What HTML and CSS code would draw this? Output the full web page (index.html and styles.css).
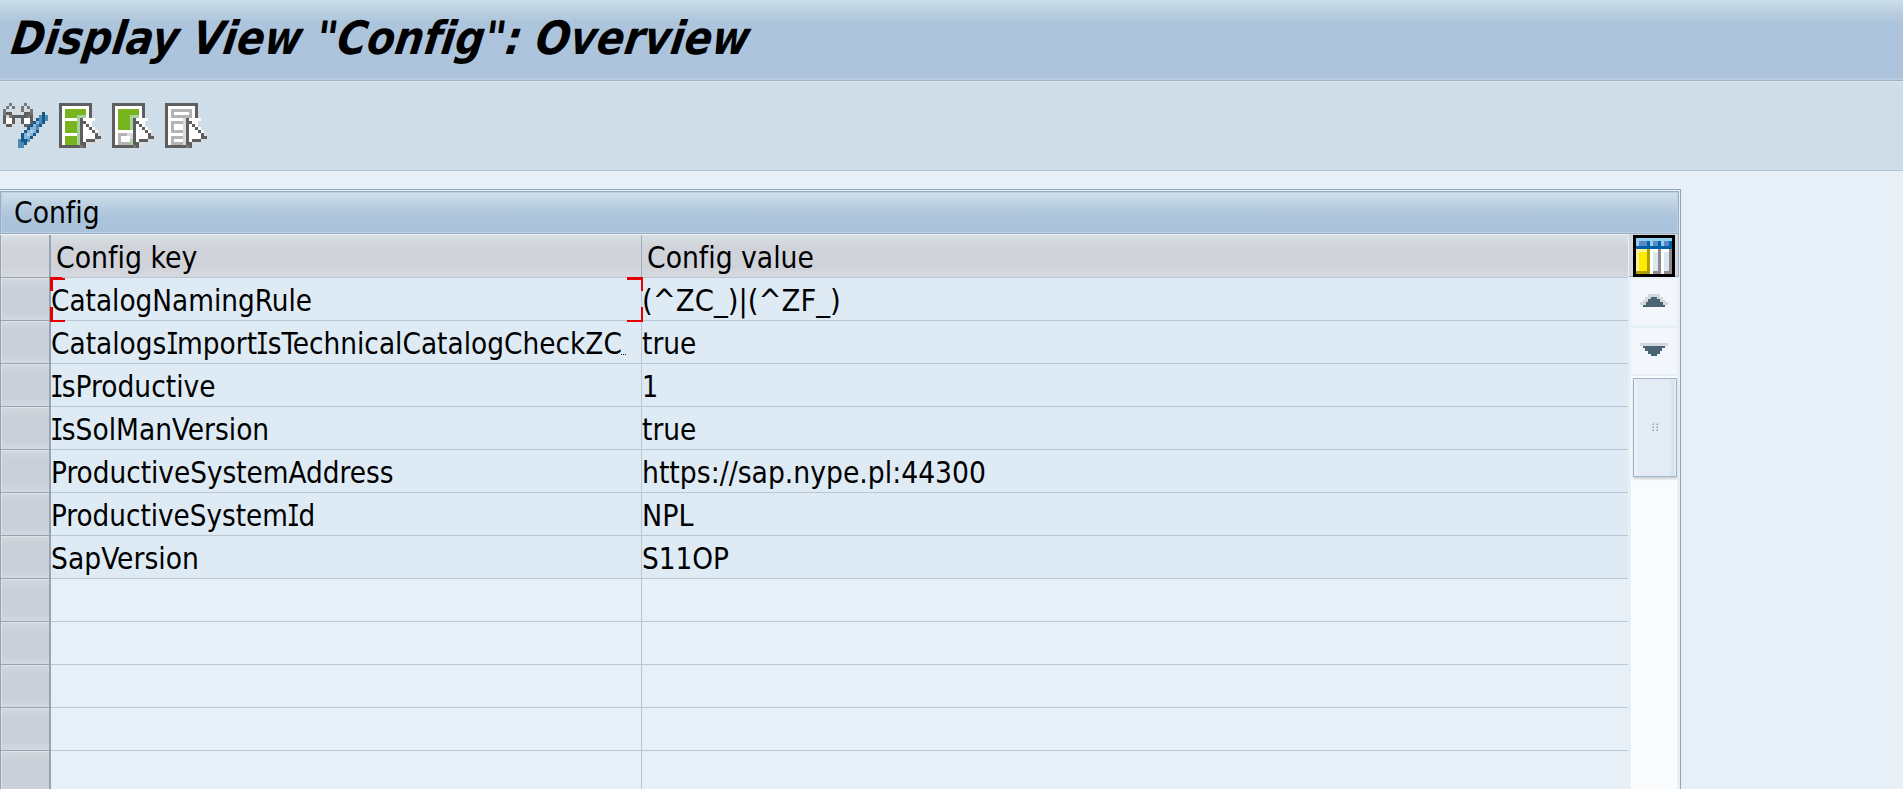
FILE: index.html
```
<!DOCTYPE html>
<html lang="en">
<head>
<meta charset="utf-8">
<title>Display View "Config": Overview</title>
<link rel="stylesheet" href="styles.css">
</head>
<body>
<header class="titlebar"><h1><span class="fit" data-w="738">Display View "Config": Overview</span></h1></header>
<nav class="toolbar" id="toolbar"></nav>
<main class="panel">
  <div class="caption"><span class="fit" data-w="86">Config</span></div>
  <div class="body">
    <div class="grid" id="grid"></div>
    <div class="side">
      <div class="settings">
        <svg width="42" height="42" viewBox="0 0 14 14" shape-rendering="crispEdges">
          <path fill="#000" d="M0 0h14v14H0z"/><path fill="#8fd0f2" d="M1 1h12v1H1z"/>
          <path fill="#8fd0f2" d="M1 2h1v1.7H1zM5.7 2h1v1.700h-1zM9.300 2h1v1.700h-1z"/>
          <path fill="#0060a8" d="M1 3.700h12v1H1zM4.700 2h1v2h-1zM8.300 2h1v2h-1zM12 2h1v2h-1z"/>
          <path fill="#5a88c4" d="M2 2h2.700v1.700H2zM6.700 2h1.600v1.700H6.700zM10.300 2H12v1.700h-1.700z"/>
          <path fill="#fff09a" d="M1 4.700h3.700v1H1zM1 4.700h1V12H1z"/><path fill="#ffeb00" d="M2 5.700h2.700V12H2z"/>
          <path fill="#ada000" d="M4.700 4.700h1V13h-1zM1 12h4v1H1z"/>
          <path fill="#fff" d="M5.700 4.700h2.600V13H5.700zM9.300 4.700H12V13H9.300z"/>
          <path fill="#dfe7ee" d="M6.700 5.700h1.600V12H6.700zM10.300 5.700H12V12h-1.700z"/>
          <path fill="#8c8c8c" d="M8.300 4.700h1V13h-1zM6.700 12h2v1h-2zM12 4.700h1V13h-1zM10.300 12h2v1h-2z"/>
        </svg>
      </div>
      <div class="arrow up">
        <svg width="28" height="14" viewBox="0 0 28 14" shape-rendering="crispEdges"><path fill="#d3d8dc" d="M8 0h12v3h3v3h2v2h3v3H0V8h3V6h2V3h3z"/><path fill="#4b6373" d="M11 3h6v2h3v3h3v3h2v2H3v-2h3V8h2V5h3z"/></svg>
      </div>
      <div class="arrow down">
        <svg width="28" height="14" viewBox="0 0 28 14" shape-rendering="crispEdges"><path fill="#d3d8dc" d="M0 0h28v3H0z"/><path fill="#4b6373" d="M3 3h22v2h-3v3h-2v3h-3v2h-6v-2H8V8H5V5H3z"/></svg>
      </div>
      <div class="track"><div class="thumb">
        <svg width="6" height="9" viewBox="0 0 6 9" shape-rendering="crispEdges"><path fill="#a3b4c2" d="M1 0h1v2H0V1h1zM5 0h1v2H4V1h1zM1 3h1v2H0V4h1zM5 3h1v2H4V4h1zM1 6h1v2H0V7h1zM5 6h1v2H4V7h1z"/></svg>
      </div></div>
    </div>
  </div>
</main>
<script src="app.js"></script>
</body>
</html>
```
FILE: styles.css
```
* { box-sizing: border-box; }
body { margin: 0; height: 789px; overflow: hidden; background: #e7eff7; color: #000; font: 30px/36px "DejaVu Sans Condensed", "DejaVu Sans", sans-serif; font-stretch: condensed; font-variant-ligatures: none; display: flex; flex-direction: column; }
.titlebar { flex: none; height: 82px; padding: 9px 0 0 10px; background: linear-gradient(#cadeeb 0, #bdd1e0 10px, #adc5dc 22px, #acc3db 78px); border-bottom: 1px solid #dfe9f1; box-shadow: inset 0 -1px #9fafc2, inset 0 -3px #b7cbe2; }
h1 { margin: 0; font-family: "DejaVu Sans Condensed", sans-serif; font-size: 46px; font-weight: bold; font-style: italic; line-height: 58px; transform: skewX(-8deg); transform-origin: 0 75%; }
.fit { display: inline-block; white-space: pre; transform-origin: 0 50%; }
.toolbar { flex: none; height: 89px; padding: 21px 0 0 3px; display: flex; gap: 8px; background: #cfdde8; border-bottom: 1px solid #afc3d2; }
.toolbar svg { display: block; }
.toolbar svg:first-child { margin-right: 3px; }
.panel { flex: none; width: 1681px; height: 620px; margin-top: 18px; border-top: 1px solid #8fa6bf; border-right: 1px solid #8ba3be; display: flex; flex-direction: column; }
.caption { flex: none; height: 43px; margin: 1px 1px 0 0; padding: 3px 0 0 13px; border: 1px solid #99aec4; box-shadow: inset 0 0 0 1px #bcd0e1; background: linear-gradient(#d0e1ed, #b8cddf 15px, #acc4dc 25px, #aac1da); }
.body { flex: 1; display: flex; min-height: 0; }
.grid { width: 1629px; }
.row { display: grid; grid-template-columns: 51px 591px 986px; height: 43px; }
.row > div { border-bottom: 1px solid #b9c6d3; }
.row > .sel { background: linear-gradient(#d4d8df, #cad0d9 9px, #cad0d8 34px, #d4d8e0); border: solid #95a3b3; border-width: 0 2px 1px 1px; box-shadow: inset 1px 1px #e0e4e8; }
.cell { padding: 5px 0 0 0; background: #deebf5; white-space: nowrap; position: relative; }
.key { border-right: 1px solid #b9c6d3; }
.empty .cell { background: #e7eff7; }
.row.head { height: 44px; border-top: 1px solid #edf1f4; }
.head .cell, .head > .sel { background: linear-gradient(#d9dfe2, #d0d4da 12px, #d0d3da 32px, #d6dae0); }
.head .cell { padding: 5px 0 0 5px; }
.head .key { border-right-color: #a1acb6; }
.capital-i { display: inline-block; width: 11px; font-family: "DejaVu Sans Mono", monospace; transform: scaleX(.75); text-indent: -3px; }
.more { position: absolute; left: 570px; bottom: 8px; display: flex; gap: 1px; }
.more i { width: 1px; height: 1px; background: #222; }
.focus { position: absolute; left: -1px; top: -2px; z-index: 1; }
.side { width: 50px; display: flex; flex-direction: column; padding-left: 2px; }
.settings { height: 43px; margin-left: -2px; padding: 1px 0 0 4px; background: #d3d8de; border-right: 1px solid #9badc0; border-bottom: 1px solid #9badc0; }
.settings svg { display: block; }
.arrow { width: 46px; height: 46px; margin-top: 2px; display: flex; align-items: flex-start; justify-content: center; padding-top: 15px; background: #f3f7fb; }
.down { margin-top: 3px; }
.track { width: 46px; flex: 1; margin-top: 2px; padding: 2px 0 0 2px; background: #fafbfd; }
.thumb { width: 44px; height: 99px; display: grid; place-items: center; border: 1px solid #a1b4c6; background: linear-gradient(90deg, #edf4f9 0, #e3ecf4 5px, #e3ecf4 35px, #d4e1eb 39px, #eaf1f7 42px); box-shadow: 0 2px 2px #cbd1d6; }
```
FILE: app.js
```
const rows = [
  ["CatalogNamingRule", 261, "(^ZC_)|(^ZF_)", 199],
  ["CatalogsImportIsTechnicalCatalogCheckZC", 571, "true", 54],
  ["IsProductive", 165, "1", 16],
  ["IsSolManVersion", 218, "true", 54],
  ["ProductiveSystemAddress", 342, "https://sap.nype.pl:44300", 344],
  ["ProductiveSystemId", 264, "NPL", 52],
  ["SapVersion", 148, "S11OP", 87],
  [], [], [], [], []
];
const fit = (t, w) => t ? `<span class="fit" data-w="${w}">${t.replace(/I/g, '<span class="capital-i">I</span>')}</span>` : "";
const focus = '<svg class="focus" width="593" height="47" shape-rendering="crispEdges"><path fill="#e60000" d="M0 1h12v1h3v2H3v11H0zM0 31h3v13h12v2H0zM577 1h16v14h-2V4h-14zM591 31h2v15h-16v-2h14z"/></svg>';
document.getElementById("grid").innerHTML =
  `<div class="row head"><div class="sel"></div><div class="cell key">${fit("Config key", 141)}</div><div class="cell">${fit("Config value", 167)}</div></div>` +
  rows.map(([k, kw, v, vw], n) => `<div class="row ${k ? "" : "empty"}"><div class="sel"></div><div class="cell key">${fit(k, kw)}${n === 1 ? '<span class="more"><i></i><i></i><i></i></span>' : ""}${n === 0 ? focus : ""}</div><div class="cell">${fit(v, vw)}</div></div>`).join("");

// Scale each label horizontally to its nominal width.
document.querySelectorAll(".fit").forEach(e => {
  e.style.transform = `scaleX(${e.dataset.w / e.offsetWidth})`;
});

const colors = { "#": "#5e5e5e", w: "#ffffff", G: "#78b41e", L: "#a9d0a0", g: "#b4b4b4", s: "#d9dbdc", b: "#4a8bba", d: "#145a8c", c: "#88b4dc", l: "#b7d2e8", k: "#777777" };
const glasses = [
  "..k....k.......",
  ".k.k..k.k......",
  "ks..ssk..k.....",
  "k##s..s##k..sds",
  "#sk#####k#s.bdb",
  "#ww#ss#ww#sdbdb",
  "#ww#..#ww#dcbd.",
  "s##s..s##dcbd..",
  "........dccbs..",
  ".......dclcd...",
  "......dclcd....",
  ".....sdccds....",
  ".....bddbs.....",
  "....sbbds......",
  ".....bbs......."
];
// A/B, C/D and E/F are the outline and fill of the three list lines; M and L lie beside the cursor.
const page = [
  "###########...",
  "#wwwwwwwww#...",
  "#wAAAAAAAw#...",
  "#wABBBBBAw#...",
  "#wAAAAMMMw#...",
  "#wwwwwL#wwww..",
  "#wCCCCL##ww...",
  "#wCDDDL#w#w...",
  "#wCDDDL#ww#w..",
  "#wCCCCL#www#w.",
  "#wwwwwL#wwww#s",
  "#wEEEEL#wwww##",
  "#wEFFFL#w###ss",
  "#wEEEEL##ss...",
  "#######k#s...."
];
const variant = map => page.map(r => r.replace(/[A-FML]/g, c => map[c] || c));
const partial = variant({ A: "G", B: "G", C: "G", D: "G", E: "g", F: "w", M: "L" });
partial[5] = "#wGGGGL#wwww..";
partial[9] = "#wwwwww#www#w.";
partial[10] = "#wgggss#wwww#s";
partial[11] = "#wgwwws#wwww##";
const icons = [
  glasses,
  variant({ A: "G", B: "G", C: "G", D: "G", E: "G", F: "G", M: "L" }),
  partial,
  variant({ A: "g", B: "w", C: "g", D: "w", E: "g", F: "w", M: "g", L: "s" })
];
document.getElementById("toolbar").innerHTML = icons.map(p => {
  const rects = p.map((r, y) => [...r].map((c, x) => colors[c] ? `<rect x="${x}" y="${y}" width="1" height="1" fill="${colors[c]}"/>` : "").join("")).join("");
  return `<svg width="45" height="45" viewBox="0 0 15 15" shape-rendering="crispEdges">${rects}</svg>`;
}).join("");
```
